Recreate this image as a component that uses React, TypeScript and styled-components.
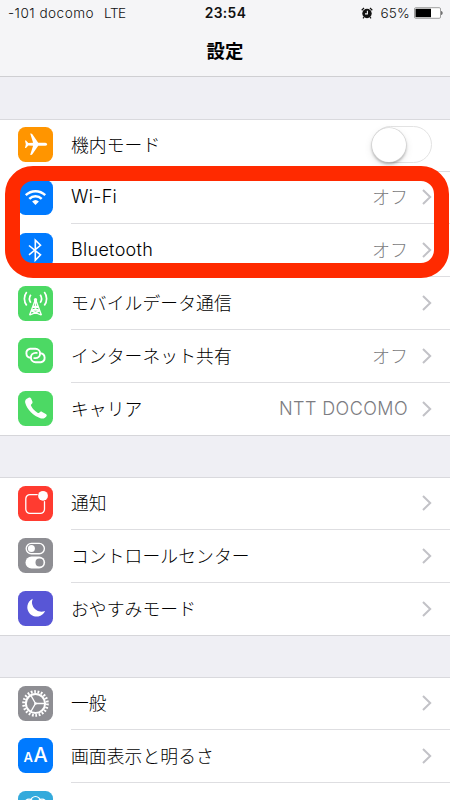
import React from "react";
import styled, { createGlobalStyle } from "styled-components";

const GlobalStyle = createGlobalStyle`
  * { box-sizing: border-box; }
  html, body { margin: 0; padding: 0; background: #efeff4; }
  body { font-family: Inter, "Noto Sans CJK JP", sans-serif; color: #000; }
`;

const Screen = styled.div`
  position: relative;
  width: 450px;
  height: 800px;
  overflow: hidden;
  background: #efeff4;
`;

const Header = styled.header`
  height: 77px;
  background: #f5f5f7;
  border-bottom: 1px solid #cfcfd2;
`;

const StatusBar = styled.div`
  display: grid;
  grid-template-columns: 1fr 60px 1fr;
  align-items: center;
  height: 25px;
  padding: 0 7px 0 8px;
  font-size: 13.6px;
  color: #111;
`;

const Carrier = styled.div`
  display: flex;
  gap: 10px;
  font-weight: 300;
  letter-spacing: 0.47px;
`;

const Network = styled.span`
  letter-spacing: -0.5px;
`;

const Clock = styled.div`
  text-align: center;
  font-size: 13.8px;
  font-weight: 600;
  letter-spacing: 0.35px;
`;

const Battery = styled.div`
  display: flex;
  align-items: center;
  justify-content: flex-end;
  font-weight: 300;
  svg { display: block; }
`;

const Percent = styled.span`
  margin: 0 4px 0 7px;
  letter-spacing: 0.2px;
`;

const Title = styled.h1`
  margin: 0;
  height: 51px;
  line-height: 50px;
  text-align: center;
  font-family: "Noto Sans CJK JP", sans-serif;
  font-size: 18.4px;
  font-weight: 700;
`;

const Group = styled.section`
  margin-top: 41.8px;
  background: #fff;
  box-shadow: inset 0 1px 0 #d9d9dd, 0 1px 0 #d6d6da;
`;

const Row = styled.div`
  display: flex;
  height: 52.75px;
  padding-left: 18px;
`;

const Tile = styled.div<{ $color: string }>`
  flex: none;
  width: 35px;
  height: 35px;
  margin-top: 8.5px;
  border-radius: 7.5px;
  overflow: hidden;
  background: ${(p) => p.$color};
  svg { display: block; }
`;

const Content = styled.div<{ $last?: boolean }>`
  flex: 1;
  display: flex;
  align-items: center;
  margin-left: 18px;
  padding-right: 18px;
  border-bottom: ${(p) => (p.$last ? "0" : "1px solid #dedee1")};
`;

const Label = styled.span<{ $latin?: boolean }>`
  flex: 1;
  white-space: nowrap;
  font-family: ${(p) => (p.$latin ? "Inter" : '"Noto Sans CJK JP"')}, sans-serif;
  font-size: ${(p) => (p.$latin ? 18 : 17.8)}px;
  font-weight: ${(p) => (p.$latin ? 350 : 300)};
  letter-spacing: ${(p) => (p.$latin ? 0.3 : 0.08)}px;
  line-height: 26px;
  padding-bottom: ${(p) => (p.$latin ? 0 : 2)}px;
`;

const Value = styled.span<{ $latin?: boolean }>`
  font-family: ${(p) => (p.$latin ? "Inter" : '"Noto Sans CJK JP"')}, sans-serif;
  font-size: 18px;
  font-weight: 300;
  letter-spacing: ${(p) => (p.$latin ? "0.42px" : "0")};
  color: #7c7c81;
  margin-right: 14px;
  line-height: 26px;
  padding-bottom: ${(p) => (p.$latin ? 0 : 2)}px;
`;

const ChevronSvg = styled.svg`
  flex: none;
  display: block;
`;

const Switch = styled.div`
  width: 60.5px;
  height: 37px;
  border: 1.8px solid #e3e3e3;
  border-radius: 19px;
`;

const Knob = styled.div`
  width: 34px;
  height: 34px;
  margin: 0.5px 0 0 -0.5px;
  border-radius: 50%;
  background: #fff;
  box-shadow: 0 0 0 0.6px #d0d0d0, 0 2px 3px rgba(0, 0, 0, 0.3), 0 3px 9px rgba(0, 0, 0, 0.1);
`;

const Highlight = styled.div`
  position: absolute;
  left: 4.7px;
  top: 165.5px;
  width: 444.8px;
  height: 112px;
  border: 15px solid #ff2a00;
  border-radius: 28px;
`;

const Chevron = () => (
  <ChevronSvg width="10" height="16" viewBox="0 0 10 16">
    <path d="M1 1 8.2 8 1 15" fill="none" stroke="#c2c2c7" strokeWidth="2" />
  </ChevronSvg>
);

const Glyph = ({ children }: { children: React.ReactNode }) => (
  <svg width="35" height="35" viewBox="0 0 35 35" fill="none" stroke="#fff" strokeLinecap="round" strokeLinejoin="round">
    {children}
  </svg>
);

const Plane = () => (
  <Glyph>
    <path
      d="M29.2 17.2c0-1-1.3-1.5-3-1.5h-6L14.4 7.2Q13.7 6.2 12.2 6.5l2.9 9.2-4.8.3-2.3-2.5H7l.8 3.7-.8 3.7h1l2.3-2.5 4.8.3-2.9 9.1q1.5.4 2.2-.6l5.8-8.5h6c1.7 0 3-.5 3-1.5Z"
      fill="#fff"
      stroke="none"
    />
  </Glyph>
);

const Wifi = () => (
  <Glyph>
    <g strokeWidth="2.5" strokeLinecap="butt">
      <path d="M7.8 15.1a14 14 0 0 1 19.4 0" />
      <path d="M11.3 18.8a9 9 0 0 1 12.4 0" />
    </g>
    <path d="M14.1 21.5a5 5 0 0 1 6.8 0L17.5 25Z" fill="#fff" stroke="none" />
  </Glyph>
);

const Bluetooth = () => (
  <Glyph>
    <path d="m11 12.5 11.5 9.3-5.2 5.4V7.2l5.2 5.1L11 21.8" strokeWidth="1.6" strokeLinecap="butt" strokeLinejoin="miter" />
  </Glyph>
);

const Tower = () => (
  <Glyph>
    <g strokeWidth="1.3" strokeLinecap="butt">
      <path d="M17.2 14 11.5 29.3M17.8 14 23.5 29.3M14.8 20.5h5.4M13.5 24.8h8M15 20.8l6.8 4.2L12 28.9M20 20.8 13.2 25l9.8 3.9M17.5 14v6.5" />
      <path d="M12.8 8.8a7 7 0 0 0 0 8M22.2 8.8a7 7 0 0 1 0 8" strokeWidth="1.7" />
      <path d="M8.7 6a11 11 0 0 0 0 13.5M26.3 6a11 11 0 0 1 0 13.5" strokeWidth="1.7" />
    </g>
    <circle cx="17.5" cy="13.8" r="1.7" fill="#fff" stroke="none" />
  </Glyph>
);

const Hotspot = () => (
  <Glyph>
    <g strokeWidth="1.9" strokeLinecap="butt">
      <path d="M12.6 19.8a4.6 4.6 0 0 1-.5-9.1h5.3a4.7 4.7 0 0 1 0 9.4h-1.9" />
      <path d="M22.4 15.2a4.6 4.6 0 0 1 .5 9.1h-5.3a4.7 4.7 0 0 1 0-9.4h1.9" />
    </g>
  </Glyph>
);

const Phone = () => (
  <Glyph>
    <path
      d="M10.6 6.8c1-.6 2-.2 2.5.8l1.3 3c.4 1 .1 1.8-.8 2.5-.8.6-.8 1.1-.4 2 1.3 2.7 3.6 5.1 6.3 6.6.8.5 1.4.4 2-.3.8-1 1.7-1.1 2.7-.5l3.6 2.1c1 .6 1.3 1.6.5 2.6-1.3 1.7-3.1 2.4-5.3 1.8C15.4 25.3 9 18.6 7.2 11.8c-.5-2.1.5-4 3.4-5Z"
      fill="#fff"
      stroke="none"
    />
  </Glyph>
);

const Notice = () => (
  <Glyph>
    <path d="M19.2 8.6H12a4.2 4.2 0 0 0-4.2 4.2v10.4a4.2 4.2 0 0 0 4.2 4.2h10.3a4.2 4.2 0 0 0 4.2-4.2v-7.6" strokeWidth="1.3" />
    <circle cx="25" cy="9.8" r="4.9" fill="#fff" stroke="none" />
  </Glyph>
);

const Controls = () => (
  <Glyph>
    <rect x="8.2" y="5.4" width="18.2" height="10.3" rx="5.15" strokeWidth="1.4" />
    <circle cx="13.4" cy="10.6" r="3.5" fill="#fff" stroke="none" />
    <rect x="7.5" y="18.5" width="19.6" height="12" rx="6" fill="#fff" stroke="none" />
    <circle cx="21.5" cy="24.5" r="4" fill="#8e8e93" stroke="none" />
  </Glyph>
);

const Moon = () => (
  <Glyph>
    <path d="M14.7 7.8A9.3 9.3 0 1 0 27.1 20 9.5 9.5 0 0 1 14.7 7.8Z" fill="#fff" stroke="none" />
  </Glyph>
);

const Gear = () => (
  <Glyph>
    <circle cx="17.5" cy="17.5" r="11.9" strokeWidth="2.8" strokeDasharray="1.75 1.649" strokeLinecap="butt" />
    <circle cx="17.5" cy="17.5" r="9.6" strokeWidth="2" />
    <path d="M17.5 17.5H27M17.5 17.5l-4.8-8.3M17.5 17.5l-4.8 8.3" strokeWidth="1.3" />
    <circle cx="17.5" cy="17.5" r="1.3" fill="#fff" stroke="none" />
  </Glyph>
);

const Letters = styled.div`
  display: flex;
  justify-content: center;
  align-items: baseline;
  gap: 0.5px;
  padding-top: 5px;
  line-height: 25px;
  color: #fff;
`;

const SmallLetter = styled.span`
  font-size: 13px;
  font-weight: 600;
`;

const LargeLetter = styled.span`
  font-size: 20px;
  font-weight: 500;
`;

const TextSize = () => (
  <Letters>
    <SmallLetter>A</SmallLetter>
    <LargeLetter>A</LargeLetter>
  </Letters>
);

const Flower = () => (
  <Glyph>
    <circle cx="17.5" cy="10.3" r="4.8" strokeWidth="1.2" />
    <circle cx="11" cy="13" r="4.8" strokeWidth="1.2" />
    <circle cx="24" cy="13" r="4.8" strokeWidth="1.2" />
  </Glyph>
);

type Item = {
  label: string;
  color: string;
  icon: React.ReactNode;
  value?: string;
  latin?: boolean;
  latinValue?: boolean;
  toggle?: boolean;
};

const groups: Item[][] = [
  [
    { label: "機内モード", color: "#ff9500", icon: <Plane />, toggle: true },
    { label: "Wi-Fi", color: "#007aff", icon: <Wifi />, value: "オフ", latin: true },
    { label: "Bluetooth", color: "#007aff", icon: <Bluetooth />, value: "オフ", latin: true },
    { label: "モバイルデータ通信", color: "#4cd964", icon: <Tower /> },
    { label: "インターネット共有", color: "#4cd964", icon: <Hotspot />, value: "オフ" },
    { label: "キャリア", color: "#4cd964", icon: <Phone />, value: "NTT DOCOMO", latinValue: true },
  ],
  [
    { label: "通知", color: "#ff3b30", icon: <Notice /> },
    { label: "コントロールセンター", color: "#8e8e93", icon: <Controls /> },
    { label: "おやすみモード", color: "#5856d6", icon: <Moon /> },
  ],
  [
    { label: "一般", color: "#8e8e93", icon: <Gear /> },
    { label: "画面表示と明るさ", color: "#007aff", icon: <TextSize /> },
    { label: "", color: "#34aadc", icon: <Flower /> },
  ],
];

const SettingRow = ({ item, last }: { item: Item; last: boolean }) => (
  <Row>
    <Tile $color={item.color}>{item.icon}</Tile>
    <Content $last={last}>
      <Label $latin={item.latin}>{item.label}</Label>
      {item.value && <Value $latin={item.latinValue}>{item.value}</Value>}
      {item.toggle ? (
        <Switch>
          <Knob />
        </Switch>
      ) : (
        <Chevron />
      )}
    </Content>
  </Row>
);

export default function App() {
  return (
    <>
      <GlobalStyle />
      <Screen>
        <Header>
          <StatusBar>
            <Carrier>
              <span>-101 docomo</span>
              <Network>LTE</Network>
            </Carrier>
            <Clock>23:54</Clock>
            <Battery>
              <svg width="12" height="12" viewBox="0 0 12 12" fill="none" stroke="#111">
                <circle cx="6" cy="6.5" r="4.7" fill="#111" stroke="none" />
                <path d="M.7 3.2 3 1M11.3 3.2 9 1M3 10l-1 1.3M9 10l1 1.3" strokeWidth="1.2" />
                <path d="M6.4 3.8v3.1H4" stroke="#f5f5f7" strokeWidth="1.1" />
              </svg>
              <Percent>65%</Percent>
              <svg width="29" height="12" viewBox="0 0 29 12">
                <rect x=".5" y=".7" width="26" height="10.6" rx="1.2" fill="#fff" stroke="#777" strokeWidth=".7" />
                <rect x="1.5" y="1.8" width="15.5" height="8.4" fill="#000" />
                <path d="M27.4 4c1.4.4 1.4 3.6 0 4Z" fill="#222" />
              </svg>
            </Battery>
          </StatusBar>
          <Title>設定</Title>
        </Header>
        {groups.map((items, g) => (
          <Group key={g}>
            {items.map((item, i) => (
              <SettingRow key={i} item={item} last={i === items.length - 1} />
            ))}
          </Group>
        ))}
        <Highlight />
      </Screen>
    </>
  );
}
